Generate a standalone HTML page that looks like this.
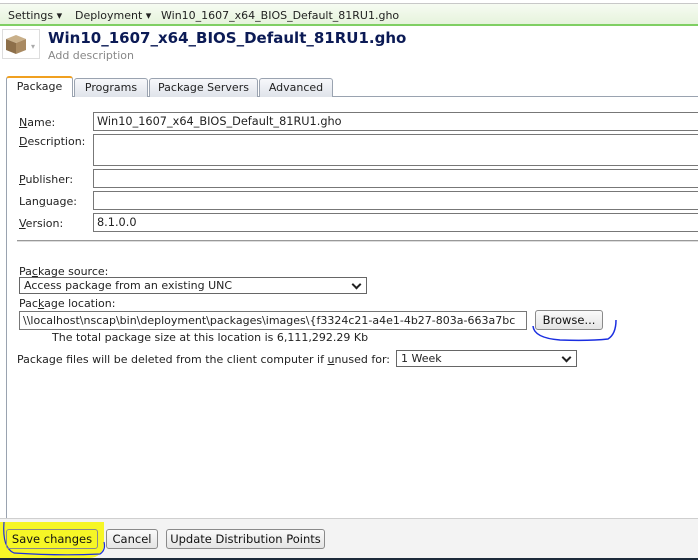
<!DOCTYPE html>
<html><head><style>
*{margin:0;padding:0;box-sizing:border-box}
body{width:698px;height:560px;position:relative;background:#fff;font-family:"DejaVu Sans","Liberation Sans",sans-serif;font-size:11px;color:#222;overflow:hidden}
.a{position:absolute}
.inp{position:absolute;border:1px solid #777;background:#fff;padding:2px 3px;font-size:11.3px;color:#222;white-space:nowrap;overflow:hidden}
.tab{position:absolute;top:78px;height:19px;border:1px solid #9aa3b0;border-bottom:none;border-radius:3px 3px 0 0;background:linear-gradient(#f7f8fb,#dfe3ea);text-align:center;line-height:18px;font-size:11px;color:#222}
.btn{position:absolute;height:20px;border:1px solid #8a8a8a;border-radius:3px;background:linear-gradient(#fafafa,#e4e4e4);text-align:center;line-height:18px;font-size:11.5px;color:#111}
.sel{position:absolute;border:1px solid #666;background:#fff;padding:1px 4px;font-size:11px;height:17px;line-height:14px}
.sel:after{content:"";position:absolute;right:6px;top:3px;width:5px;height:5px;border-right:2px solid #222;border-bottom:2px solid #222;transform:rotate(45deg)}
u{text-decoration:underline}
</style></head><body>
<div class="a" style="left:0;top:3px;width:698px;height:1px;background:#c8c8c8"></div>
<div class="a" style="left:0;top:4px;width:698px;height:20px;background:linear-gradient(#f6fbf2,#e6f3dc)"></div>
<div class="a" style="left:0;top:24px;width:698px;height:2px;background:#7fcf63"></div>
<div class="a" style="left:8px;top:9px;font-size:11px;color:#222">Settings ▾</div>
<div class="a" style="left:75px;top:9px;font-size:11px;color:#222">Deployment ▾</div>
<div class="a" style="left:161px;top:9px;font-size:11px;color:#222">Win10_1607_x64_BIOS_Default_81RU1.gho</div>

<div class="a" style="left:2px;top:29px;width:38px;height:30px;border:1px solid #ddd;background:#fff"></div>
<svg class="a" style="left:4px;top:32px" width="24" height="24" viewBox="0 0 24 24"><polygon points="2,7 12,3 22,7 12,11" fill="#c9b08a"/><polygon points="2,7 12,11 12,22 2,18" fill="#8d6f4a"/><polygon points="12,11 22,7 22,18 12,22" fill="#a98a62"/></svg>
<div class="a" style="left:31px;top:42px;font-size:8px;color:#aaa">▾</div>
<div class="a" style="left:48px;top:29px;font-size:15px;font-weight:bold;color:#0b1a55">Win10_1607_x64_BIOS_Default_81RU1.gho</div>
<div class="a" style="left:48px;top:49px;font-size:11px;color:#888">Add description</div>

<div class="a" style="left:72px;top:96px;width:626px;height:1px;background:#9aa3b0"></div>
<div class="a" style="left:6px;top:96px;width:1px;height:423px;background:#9aa3b0"></div>
<div class="tab" style="left:6px;top:76px;width:67px;height:21px;background:#fff;border-top:2px solid #f0a020;border-color:#f0a020 #9aa3b0 #9aa3b0 #9aa3b0;border-bottom:none">Package</div>
<div class="tab" style="left:74px;width:74px">Programs</div>
<div class="tab" style="left:149px;width:109px">Package Servers</div>
<div class="tab" style="left:259px;width:74px">Advanced</div>

<div class="a" style="left:19px;top:116px"><u>N</u>ame:</div>
<div class="inp" style="left:93px;top:112px;width:610px;height:19px">Win10_1607_x64_BIOS_Default_81RU1.gho</div>
<div class="a" style="left:19px;top:135px"><u>D</u>escription:</div>
<div class="inp" style="left:93px;top:134px;width:610px;height:32px"></div>
<div class="a" style="left:19px;top:173px"><u>P</u>ublisher:</div>
<div class="inp" style="left:93px;top:169px;width:610px;height:19px"></div>
<div class="a" style="left:19px;top:195px">Lan<u>g</u>uage:</div>
<div class="inp" style="left:93px;top:191px;width:610px;height:19px"></div>
<div class="a" style="left:19px;top:217px"><u>V</u>ersion:</div>
<div class="inp" style="left:93px;top:213px;width:610px;height:19px">8.1.0.0</div>
<div class="a" style="left:17px;top:240px;width:690px;height:2px;border-top:1px solid #999;border-bottom:1px solid #ddd"></div>

<div class="a" style="left:19px;top:265px">Pa<u>c</u>kage source:</div>
<div class="sel" style="left:19px;top:277px;width:348px">Access package from an existing UNC</div>
<div class="a" style="left:19px;top:297px">Pac<u>k</u>age location:</div>
<div class="inp" style="left:19px;top:311px;width:508px;height:19px;padding-left:3px;font-size:11px">\\localhost\nscap\bin\deployment\packages\images\{f3324c21-a4e1-4b27-803a-663a7bc</div>
<div class="btn" style="left:535px;top:310px;width:68px">Browse...</div>
<svg class="a" style="left:530px;top:316px" width="90" height="28"><path d="M3 10 Q4 22 30 24 Q60 25 78 23 Q86 18 86 4" stroke="#1a2ee0" stroke-width="1.5" fill="none"/></svg>
<div class="a" style="left:52px;top:331px">The total package size at this location is 6,111,292.29 Kb</div>
<div class="a" style="left:17px;top:353px">Package files will be deleted from the client computer if <u>u</u>nused for:</div>
<div class="sel" style="left:396px;top:350px;width:181px">1 Week</div>

<div class="a" style="left:0;top:518px;width:698px;height:1px;background:#cfcfcf"></div>
<div class="a" style="left:0;top:519px;width:698px;height:39px;background:#f3f3f3"></div>
<div class="a" style="left:0;top:558px;width:698px;height:2px;background:#1c2a3a"></div>
<div class="a" style="left:0;top:522px;width:104px;height:36px;background:#f5f51a;border-radius:0 0 14px 0;opacity:.95"></div>
<svg class="a" style="left:0;top:520px" width="110" height="40"><path d="M4 2 Q2 28 14 33 Q60 36 100 34 Q106 30 104 22" stroke="#1a2ee0" stroke-width="1.2" fill="none"/></svg>
<div class="btn" style="left:6px;top:529px;width:92px;background:transparent">Save changes</div>
<div class="btn" style="left:106px;top:529px;width:52px">Cancel</div>
<div class="btn" style="left:166px;top:529px;width:159px">Update Distribution Points</div>
</body></html>
